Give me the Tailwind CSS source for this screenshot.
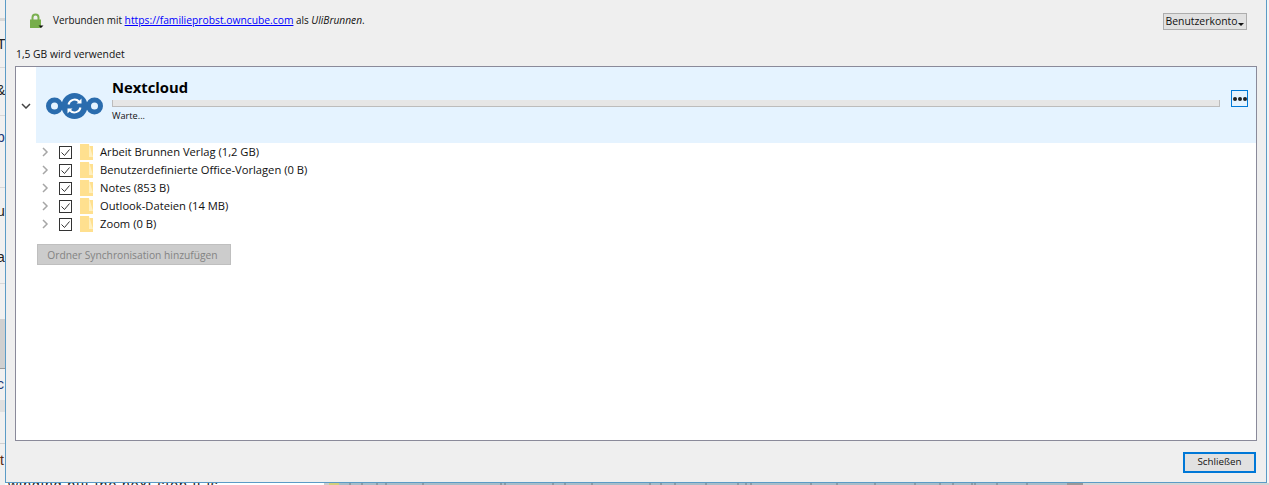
<!DOCTYPE html>
<html><head><meta charset="utf-8"><script src="https://cdn.jsdelivr.net/npm/@tailwindcss/browser@4"></script></head>
<body class="m-0 overflow-hidden bg-white">
<div class="relative w-[1269px] h-[485px] overflow-hidden bg-[#f4f4f4] font-['Open_Sans','Noto_Sans',sans-serif] text-[10.200px] text-[#111]">
  <!-- what lies behind the dialog -->
  <div class="absolute left-0 top-[483px] w-[324px] h-[2px] bg-white"></div>
  <div class="absolute left-0 top-0 w-[5px] h-[485px] bg-[#f0f0f0]"></div>
  <div class="absolute left-0 top-[18px] w-[5px] h-[3px] bg-[#d8d8d8]"></div>
  <div class="absolute left-0 top-[67px] w-[5px] h-[1px] bg-[#d8d8d8]"></div>
  <div class="absolute left-0 top-[115px] w-[5px] h-[1px] bg-[#d8d8d8]"></div>
  <div class="absolute left-0 top-[187px] w-[5px] h-[1px] bg-[#d8d8d8]"></div>
  <div class="absolute left-0 top-[283px] w-[5px] h-[1px] bg-[#d8d8d8]"></div>
  <div class="absolute left-0 top-[319px] w-[5px] h-[49px] bg-[#d0d0d0]"></div>
  <div class="absolute left-0 top-[368px] w-[5px] h-[1px] bg-[#999]"></div>
  <div class="absolute left-0 top-[400px] w-[5px] h-[12px] bg-[#e0e0e0]"></div>
  <div class="absolute left-0 top-[443px] w-[5px] h-[1px] bg-[#d0d0d0]"></div>
  <span class="absolute left-[-3px] top-[36px] text-[14px] leading-[16px] font-['Liberation_Sans'] text-[#222]">T</span>
  <span class="absolute left-[-4px] top-[82px] text-[14px] leading-[16px] font-['Liberation_Sans'] text-[#222]">&amp;</span>
  <span class="absolute left-[-3px] top-[129px] text-[14px] leading-[16px] font-['Liberation_Sans'] text-[#1c3a78]">b</span>
  <span class="absolute left-[-3px] top-[203px] text-[14px] leading-[16px] font-['Liberation_Sans'] text-[#222]">u</span>
  <span class="absolute left-[-3px] top-[249px] text-[14px] leading-[16px] font-['Liberation_Sans'] text-[#222]">a</span>
  <span class="absolute left-[-3px] top-[376px] text-[14px] leading-[16px] font-['Liberation_Sans'] text-[#1c3a78]">c</span>
  <span class="absolute left-[0px] top-[452px] text-[14px] leading-[16px] font-['Liberation_Sans'] text-[#5a2a10]">t</span>
  <span class="absolute left-[8px] top-[477px] text-[14px] leading-[16px] whitespace-nowrap font-['Liberation_Sans'] tracking-[1px] text-[#222]">winding but the next step it is</span>
  <div class="absolute left-[324px] top-[483px] w-[5px] h-[2px] bg-[#cccccc]"></div>
  <div class="absolute left-[329px] top-[483px] w-[10px] h-[2px] bg-[#d2cf7c]"></div>
  <div class="absolute left-[339px] top-[483px] w-[728px] h-[2px] bg-[#a7bdc9]"></div>
  <div class="absolute left-[1067px] top-[483px] w-[16px] h-[2px] bg-[#999]"></div>
  <div class="absolute left-[1083px] top-[483px] w-[186px] h-[2px] bg-[#d4d4d4]"></div>
  <svg class="absolute left-0 top-[483px]" width="1269" height="2"><path d="M350 0v2M362 0v2M377 0v2M386 0v2M423 0v2M501 0v2M505 0v2M553 0v2M565 0v2M592 0v2M650 0v2M661 0v2M675 0v2M706 0v2M738 0v2M746 0v2M751 0v2M811 0v2M837 0v2M875 0v2M915 0v2M940 0v2M953 0v2M972 0v2M975 0v2M997 0v2M1027 0v2" stroke="#6f7a80" stroke-width="1"/></svg>

  <!-- dialog window -->
  <div class="absolute left-[5px] top-[-1px] w-[1262px] h-[484px] border border-[#5b9bc6] bg-[#efefef] flex flex-col">
    <div class="flex items-center h-[30px] mt-[6px] pl-[23px] pr-[19px] shrink-0">
      <svg width="16" height="16" viewBox="0 0 16 16" class="shrink-0"><path d="M3.500 7V4.500a3 3 0 0 1 6 0V7" fill="none" stroke="#7ab050" stroke-width="2"/><rect x="1" y="6.500" width="11" height="8.500" fill="#76ad4a"/><path d="M9.500 12.500h5l-2.500 2.500z" fill="#111"/></svg>
      <span class="ml-[8px] text-[9.900px]">Verbunden mit <a class="text-[#0000ff] underline text-[10.300px]">https://familieprobst.owncube.com</a> als <i class="text-[10.200px]">UliBrunnen</i>.</span>
      <div class="ml-auto w-[84px] h-[17px] border border-[#adadad] bg-[#e1e1e1] flex items-center justify-center text-[10.400px] leading-none">Benutzerkonto<svg width="6" height="3" viewBox="0 0 6 3" class="ml-[1px] mt-[6px]"><path d="M0 0h6L3 3z" fill="#111"/></svg></div>
    </div>
    <div class="pl-[10px] h-[30px] pt-[8px] flex items-center text-[10.300px] shrink-0">1,5 GB wird verwendet</div>
    <div class="mx-[9px] h-[375px] border border-[#8a8a9a] bg-white flex flex-col shrink-0">
      <div class="flex h-[76px] shrink-0">
        <div class="w-[20px] flex items-center justify-center pt-[1px]"><svg width="10" height="6" viewBox="0 0 10 6"><path d="M1 1l4 4 4-4" fill="none" stroke="#444" stroke-width="1.500"/></svg></div>
        <div class="flex-1 bg-[#e5f3ff] flex items-center pl-[10px]">
          <svg width="57" height="26" viewBox="0 0 57 26" class="shrink-0 mt-[1px]"><g fill="none" stroke="#2a6cae"><circle cx="8.500" cy="13" r="6" stroke-width="5"/><circle cx="48.500" cy="13" r="6" stroke-width="5"/></g><circle cx="28.500" cy="13" r="13" fill="#2a6cae"/><path d="M22.500 11.500a6.200 6.200 0 0 1 10.500-3M34.500 14.500a6.200 6.200 0 0 1-10.500 3" fill="none" stroke="#fff" stroke-width="2"/><path d="M30.500 10.500h5v-5zM26.500 15.500h-5v5z" fill="#fff"/></svg>
          <div class="ml-[9px] w-[1108px] shrink-0">
            <div class="font-bold text-[14.800px] leading-[20px] text-black -mt-[12px]">Nextcloud</div>
            <div class="h-[7px] mt-[3px] bg-[#e6e6e6] border-l border-b border-r border-[#bcbcbc]"></div>
            <div class="text-[9.200px] leading-[12px] mt-[3px]">Warte...</div>
          </div>
          <div class="ml-[11px] w-[17px] h-[17px] border border-[#0078d7] flex items-center justify-center gap-[1px] -mt-[13px]"><span class="w-[4px] h-[4px] rounded-full bg-[#222] shrink-0"></span><span class="w-[4px] h-[4px] rounded-full bg-[#222] shrink-0"></span><span class="w-[4px] h-[4px] rounded-full bg-[#222] shrink-0"></span></div>
        </div>
      </div>
      <div class="flex flex-col pl-[26px] text-[11.200px]">
        <div class="flex items-center h-[18px]"><svg width="7" height="10" viewBox="0 0 7 10"><path d="M1 1l4 4-4 4" fill="none" stroke="#a6a6a6" stroke-width="1.500"/></svg><svg width="13" height="13" viewBox="0 0 13 13" class="ml-[10px]"><rect x=".5" y=".5" width="12" height="12" fill="#fff" stroke="#333"/><path d="M2.500 6.500l3 3 5-6" fill="none" stroke="#333"/></svg><svg width="13" height="16" viewBox="0 0 13 16" class="ml-[8px]"><path d="M0 0h9v2h4v14H0z" fill="#ffe08f"/><path d="M9 0v13h4" fill="#fff0c0"/></svg><span class="ml-[7px] leading-[16px]">Arbeit Brunnen Verlag (1,2 GB)</span></div>
        <div class="flex items-center h-[18px]"><svg width="7" height="10" viewBox="0 0 7 10"><path d="M1 1l4 4-4 4" fill="none" stroke="#a6a6a6" stroke-width="1.500"/></svg><svg width="13" height="13" viewBox="0 0 13 13" class="ml-[10px]"><rect x=".5" y=".5" width="12" height="12" fill="#fff" stroke="#333"/><path d="M2.500 6.500l3 3 5-6" fill="none" stroke="#333"/></svg><svg width="13" height="16" viewBox="0 0 13 16" class="ml-[8px]"><path d="M0 0h9v2h4v14H0z" fill="#ffe08f"/><path d="M9 0v13h4" fill="#fff0c0"/></svg><span class="ml-[7px] leading-[16px]">Benutzerdefinierte Office-Vorlagen (0 B)</span></div>
        <div class="flex items-center h-[18px]"><svg width="7" height="10" viewBox="0 0 7 10"><path d="M1 1l4 4-4 4" fill="none" stroke="#a6a6a6" stroke-width="1.500"/></svg><svg width="13" height="13" viewBox="0 0 13 13" class="ml-[10px]"><rect x=".5" y=".5" width="12" height="12" fill="#fff" stroke="#333"/><path d="M2.500 6.500l3 3 5-6" fill="none" stroke="#333"/></svg><svg width="13" height="16" viewBox="0 0 13 16" class="ml-[8px]"><path d="M0 0h9v2h4v14H0z" fill="#ffe08f"/><path d="M9 0v13h4" fill="#fff0c0"/></svg><span class="ml-[7px] leading-[16px]">Notes (853 B)</span></div>
        <div class="flex items-center h-[18px]"><svg width="7" height="10" viewBox="0 0 7 10"><path d="M1 1l4 4-4 4" fill="none" stroke="#a6a6a6" stroke-width="1.500"/></svg><svg width="13" height="13" viewBox="0 0 13 13" class="ml-[10px]"><rect x=".5" y=".5" width="12" height="12" fill="#fff" stroke="#333"/><path d="M2.500 6.500l3 3 5-6" fill="none" stroke="#333"/></svg><svg width="13" height="16" viewBox="0 0 13 16" class="ml-[8px]"><path d="M0 0h9v2h4v14H0z" fill="#ffe08f"/><path d="M9 0v13h4" fill="#fff0c0"/></svg><span class="ml-[7px] leading-[16px]">Outlook-Dateien (14 MB)</span></div>
        <div class="flex items-center h-[18px]"><svg width="7" height="10" viewBox="0 0 7 10"><path d="M1 1l4 4-4 4" fill="none" stroke="#a6a6a6" stroke-width="1.500"/></svg><svg width="13" height="13" viewBox="0 0 13 13" class="ml-[10px]"><rect x=".5" y=".5" width="12" height="12" fill="#fff" stroke="#333"/><path d="M2.500 6.500l3 3 5-6" fill="none" stroke="#333"/></svg><svg width="13" height="16" viewBox="0 0 13 16" class="ml-[8px]"><path d="M0 0h9v2h4v14H0z" fill="#ffe08f"/><path d="M9 0v13h4" fill="#fff0c0"/></svg><span class="ml-[7px] leading-[16px]">Zoom (0 B)</span></div>
      </div>
      <div class="ml-[21px] mt-[11px] w-[194px] h-[21px] bg-[#cccccc] border border-[#bfbfbf] text-[#838383] flex items-center justify-center pt-[2px] pr-[3px] text-[10.250px]">Ordner Synchronisation hinzufügen</div>
    </div>
    <div class="flex justify-end pr-[10px] mt-[11px]">
      <div class="w-[73px] h-[21px] border-2 border-[#0078d7] bg-[#e1e1e1] flex items-center justify-center text-[9.800px]">Schließen</div>
    </div>
  </div>
</div>
</body></html>
